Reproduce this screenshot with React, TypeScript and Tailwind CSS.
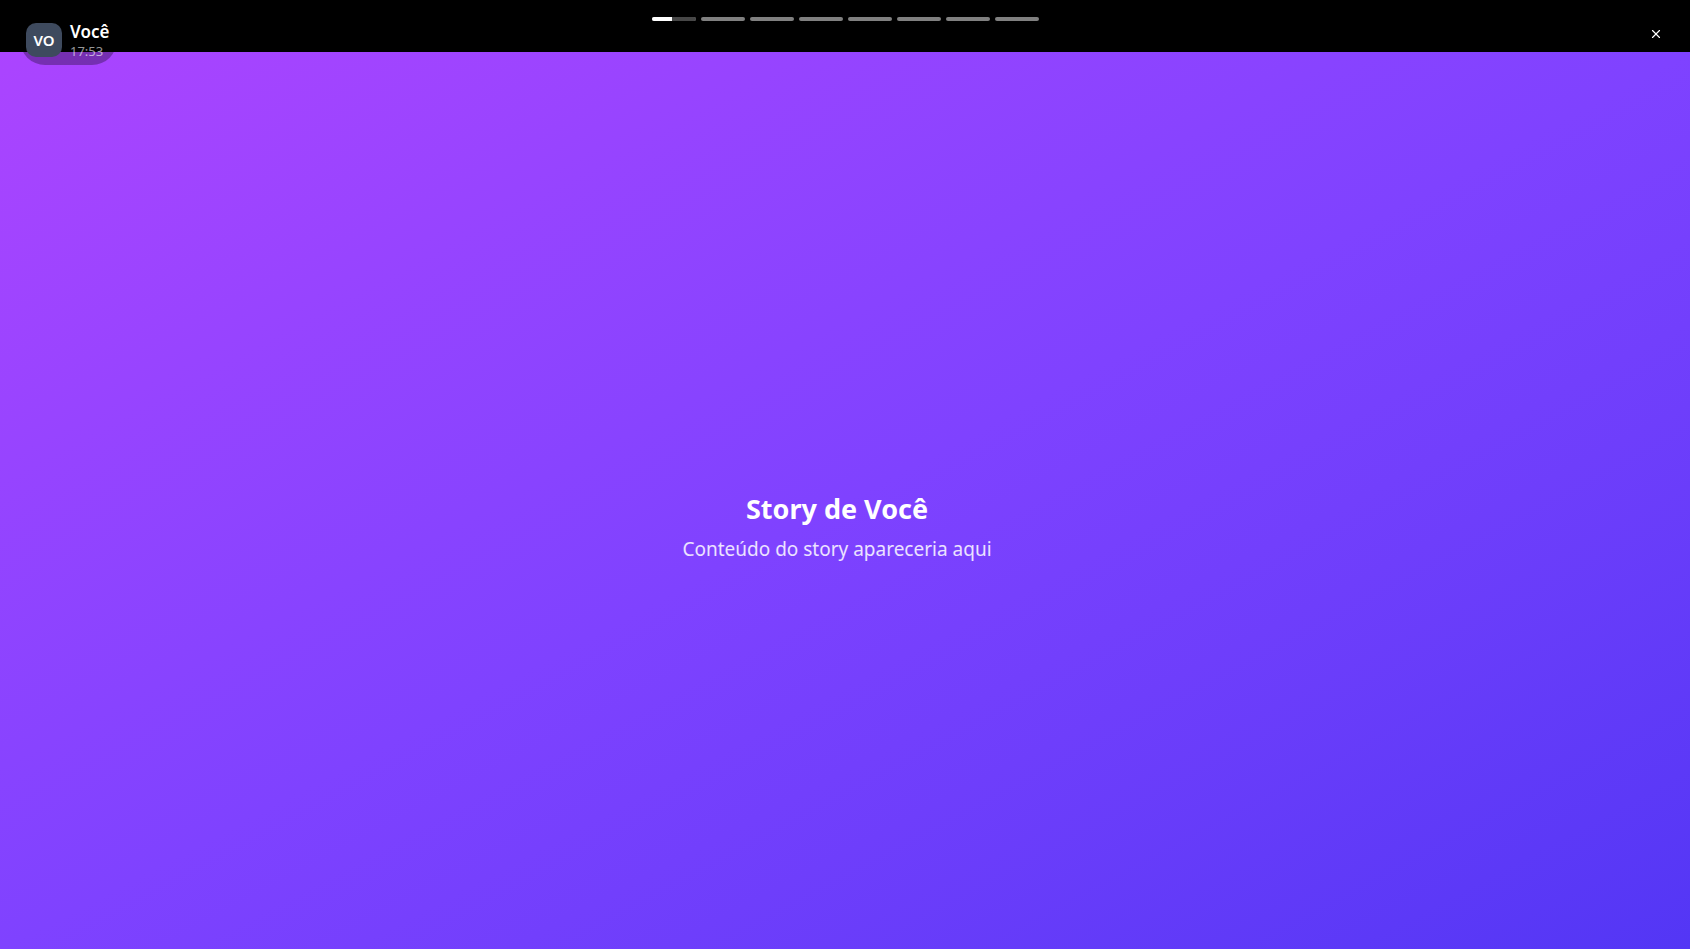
import { X } from 'lucide-react';

const bars = [0, 1, 2, 3, 4, 5, 6, 7];

export default function App() {
  return (
    <div className="flex h-screen w-full flex-col overflow-hidden bg-black font-['Noto_Sans',sans-serif] text-white">
      {/* Top bar */}
      <div className="relative h-[52px] shrink-0 bg-black">
        <div className="flex justify-center pt-[17px]">
          <div className="flex gap-[5px]">
            {bars.map((i) => (
              <div key={i} className="h-[4px] w-[44px] overflow-hidden rounded-full bg-white/50">
                {i === 0 && (
                  <div className="flex h-full">
                    <div className="h-full w-[20px] bg-white" />
                    <div className="h-full flex-1 bg-[#474747]" />
                  </div>
                )}
              </div>
            ))}
          </div>
        </div>

        <button className="absolute right-[25px] top-[25px] flex h-[18px] w-[18px] items-center justify-center text-white">
          <X className="h-[14px] w-[14px]" strokeWidth={2} />
        </button>

        {/* User pill */}
        <div className="absolute left-[20px] top-[15px] z-10 flex h-[50px] items-center gap-[8px] rounded-full bg-black/30 pl-[6px] pr-[8px]">
          <div className="flex h-[34px] w-[36px] items-center justify-center rounded-[10px] bg-[#3e4a5e] text-[15px] font-semibold">
            VO
          </div>
          <div className="flex flex-col leading-none">
            <span className="text-[17px] font-semibold">Você</span>
            <span className="mt-[5px] text-[13px] text-white/60">17:53</span>
          </div>
        </div>
      </div>

      {/* Story content */}
      <div className="flex flex-1 flex-col items-center justify-center bg-gradient-to-br from-[#ab44ff] via-[#7f42ff] to-[#5336f5] pr-[16px] pt-[54px]">
        <h1 className="text-[27px] font-bold leading-tight">Story de Você</h1>
        <p className="mt-[9px] text-[19px] text-white/85">Conteúdo do story apareceria aqui</p>
      </div>
    </div>
  );
}
